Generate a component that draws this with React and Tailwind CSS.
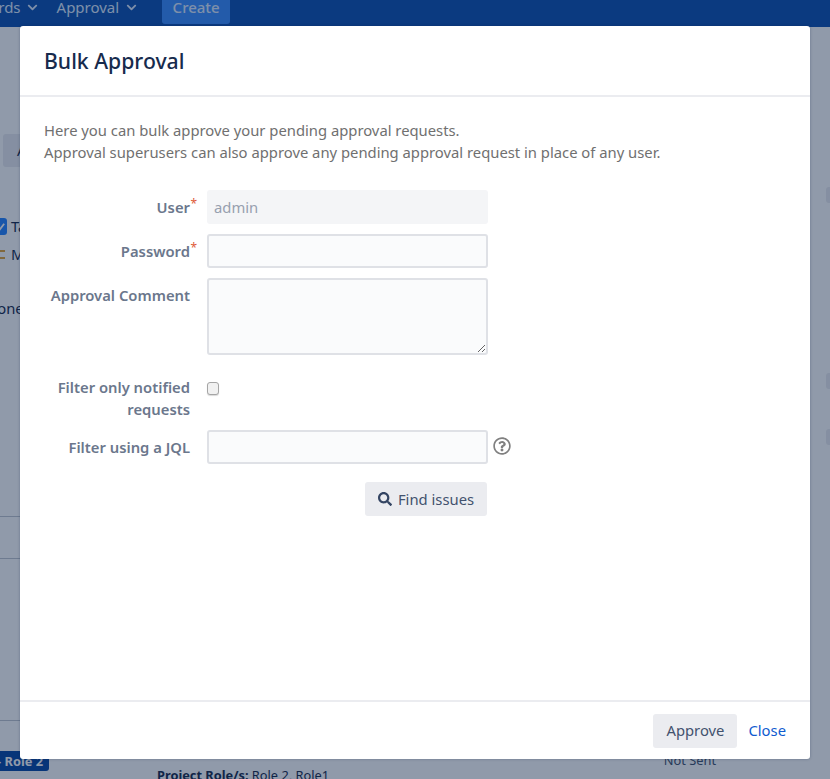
import { FaChevronDown, FaRegQuestionCircle, FaSearch } from 'react-icons/fa';

const fieldBase = 'w-[281px] h-[34px] rounded-[3px] px-[5px] text-[14.8px] outline-none';
const fieldClass = `${fieldBase} border-2 border-[#dfe1e6] bg-[#fafbfc] text-[#172b4d]`;

const Required = () => <span className="absolute -right-[7px] top-[-1px] text-xs font-normal text-[#de5b3a]">*</span>;

const Label = ({ children, required, className = 'pt-[6px]' }) => (
  <label className={`w-[146px] flex-none text-right text-[14.8px] font-semibold leading-[22px] text-[#6b778c] ${className}`}>
    <span className="relative">
      {children}
      {required && <Required />}
    </span>
  </label>
);

const Row = ({ label, required, labelClass, children }) => (
  <div className="flex gap-[17px]">
    <Label required={required} className={labelClass}>{label}</Label>
    {children}
  </div>
);

const Background = () => (
  <div className="flex h-full flex-col overflow-hidden bg-white text-[14.8px] text-[#172b4d]">
    <header className="flex h-[27px] flex-none items-start bg-[#0d51b2] text-[15px] text-[#deebff]">
      <div className="flex h-[14px] items-center">
        <span className="ml-[-29px]">Boards</span>
        <FaChevronDown className="ml-[6px] text-[11px]" />
        <span className="ml-[19px]">Approval</span>
        <FaChevronDown className="ml-[7px] text-[11px]" />
      </div>
      <div className="ml-[25px] mt-[-10px] flex h-[34px] w-[68px] items-center justify-center rounded-[3px] bg-[#3a8dff] font-medium">Create</div>
    </header>
    <main className="flex min-h-0 flex-1 justify-between">
      <div className="flex w-[20px] flex-col">
        <div className="mt-[107px] ml-[3px] h-[33px] w-[30px] flex-none rounded-[3px] bg-[#ebecf0] pl-[14px] leading-[33px]">A</div>
        <div className="mt-[51px] flex h-[17px] items-center gap-[4px] whitespace-nowrap">
          <span className="relative h-[17px] w-[7px] flex-none overflow-hidden rounded-r-[3px] bg-[#2684ff]">
            <svg viewBox="0 0 12 12" className="absolute top-[3px] right-[1px] h-[11px] w-[11px]" fill="none" stroke="white" strokeWidth="2"><path d="M2 6.5 5 9.5 10 3" /></svg>
          </span>
          <span>Ta</span>
        </div>
        <div className="mt-[11px] flex h-[17px] items-center gap-[6px] whitespace-nowrap">
          <span className="h-[9px] w-[5px] flex-none border-y-2 border-[#e2a43a]" />
          <span>M</span>
        </div>
        <div className="mt-[34px] ml-[-14px] whitespace-nowrap">None</div>
        <div className="mt-[197px] h-px w-[20px] flex-none bg-[#c1c7d0]" />
        <div className="mt-[41px] h-px w-[20px] flex-none bg-[#c1c7d0]" />
        <div className="mt-[161px] h-px w-[20px] flex-none bg-[#c1c7d0]" />
        <div className="mt-[30px] ml-[-10px] flex h-[20px] w-[59px] flex-none items-center justify-end rounded-[3px] bg-[#0747a6] pr-[6px] text-[12.8px] font-bold whitespace-nowrap text-white">– Role 2</div>
      </div>
      <div className="flex min-w-0 flex-1 items-end justify-between pl-[137px]">
        <p className="mb-[-6px] whitespace-nowrap text-[12.8px]"><b className="font-bold">Project Role/s:</b> Role 2, Role1</p>
        <p className="mb-[9px] pr-[110px] text-[12.8px] whitespace-nowrap text-[#42526e]">Not Sent</p>
      </div>
      <div className="flex w-[4px] flex-none flex-col">
        <div className="mt-[160px] h-[16px] w-[10px] flex-none rounded-[3px] bg-[#ebecf0]" />
        <div className="mt-[170px] h-[16px] w-[10px] flex-none rounded-[3px] bg-[#ebecf0]" />
        <div className="mt-[40px] h-[16px] w-[10px] flex-none rounded-[3px] bg-[#ebecf0]" />
      </div>
    </main>
  </div>
);

const BulkApprovalDialog = () => (
  <div className="absolute inset-0 bg-[#091e42]/45">
    <section className="absolute top-[26px] left-[20px] flex h-[733px] w-[790px] flex-col rounded-[3px] bg-white shadow-[0_0_3px_rgba(9,30,66,0.3)]">
      <header className="flex h-[71px] flex-none items-center border-b-2 border-[#ebecf0] px-[24px]">
        <h2 className="text-[21.2px] font-medium text-[#172b4d]">Bulk Approval</h2>
      </header>
      <div className="flex-1 px-[24px] pt-[22px]">
        <p className="text-[14.8px] leading-[22px] text-[#707070]">
          Here you can bulk approve your pending approval requests.<br />
          Approval superusers can also approve any pending approval request in place of any user.
        </p>
        <form className="mt-[27px] flex flex-col gap-[10px]">
          <Row label="User" required>
            <input className={`${fieldBase} border-2 border-transparent bg-[#f4f5f7] text-[#97a0af] disabled:opacity-100`} defaultValue="admin" disabled />
          </Row>
          <Row label="Password" required>
            <input className={fieldClass} type="password" />
          </Row>
          <Row label="Approval Comment">
            <textarea className={`${fieldBase} h-[77px] border-2 border-[#dfe1e6] bg-[#fafbfc] text-[#172b4d]`} />
          </Row>
          <Row label="Filter only notified requests" labelClass="pt-[11px]">
            <input type="checkbox" className="mt-[17px] h-[13px] w-[12px] appearance-none rounded-[3px] border border-[#a5a5a5] bg-[#f1f1f1] shadow-[0_1px_1px_rgba(0,0,0,0.15)]" />
          </Row>
          <Row label="Filter using a JQL">
            <div className="flex items-start gap-[5px]">
              <input className={fieldClass} />
              <FaRegQuestionCircle className="mt-[7px] text-[18px] text-[#808080]" />
            </div>
          </Row>
          <div className="mt-[8px] ml-[321px]">
            <button type="button" className="flex h-[34px] w-[122px] items-center justify-center gap-[6px] rounded-[3px] bg-[#ebecf0] text-[14.8px] text-[#42526e]">
              <FaSearch className="text-[14px] text-[#344563]" />
              Find issues
            </button>
          </div>
        </form>
      </div>
      <footer className="flex h-[59px] flex-none items-center justify-end gap-[11px] border-t-2 border-[#ebecf0] pr-[24px]">
        <button type="button" className="h-[34px] w-[84px] rounded-[3px] bg-[#ebecf0] text-[14.8px] text-[#42526e]">Approve</button>
        <a className="text-[14.8px] text-[#0f5bd0]">Close</a>
      </footer>
    </section>
  </div>
);

export default function App() {
  return (
    <div className="relative h-[779px] w-[830px] overflow-hidden font-['Noto_Sans',sans-serif]">
      <Background />
      <BulkApprovalDialog />
    </div>
  );
}
